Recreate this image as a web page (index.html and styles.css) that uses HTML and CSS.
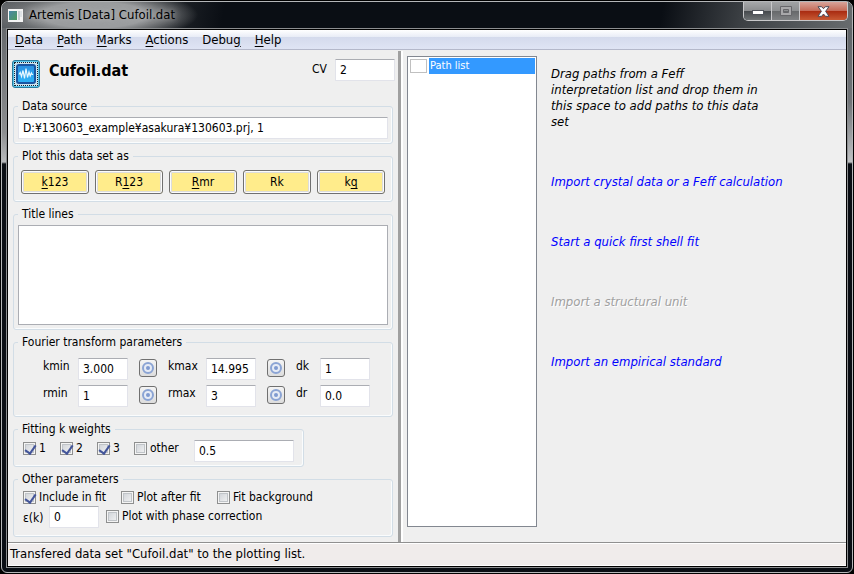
FILE: index.html
```html
<!DOCTYPE html>
<html lang="en">
<head>
<meta charset="utf-8">
<title>Artemis [Data] Cufoil.dat</title>
<link rel="stylesheet" href="styles.css">
</head>
<body>
<div class="window">
  <header class="titlebar">
    <svg class="app-icon" width="15" height="13" viewBox="0 0 15 13" aria-hidden="true">
      <defs>
        <linearGradient id="pane" x1="0" y1="0" x2="1" y2="1"><stop offset="0" stop-color="#4a86a8"/><stop offset="1" stop-color="#4d9a5c"/></linearGradient>
      </defs>
      <rect width="15" height="13" fill="#f4f4f4"/>
      <rect x="1" y="2" width="8" height="9" fill="url(#pane)"/>
      <rect x="10" y="2" width="2" height="9" fill="#c9d0d4"/>
      <rect x="12" y="2" width="2" height="6" fill="#dfe3e6"/>
    </svg>
    <span class="title-text">Artemis [Data] Cufoil.dat</span>
    <div class="window-buttons">
      <button type="button" class="win-btn" aria-label="Minimize">
        <svg width="12" height="6" viewBox="0 0 12 6"><rect x=".5" y=".5" width="11" height="4" fill="#fff" stroke="#50545c"/></svg>
      </button>
      <button type="button" class="win-btn" aria-label="Maximize" disabled>
        <svg width="12" height="10" viewBox="0 0 12 10"><path d="M.5.5h11v9H.5zM3.500 3.500h5v3h-5z" fill="#a8a8aa" fill-rule="evenodd" stroke="#66666a"/></svg>
      </button>
      <button type="button" class="win-btn win-close" aria-label="Close">
        <svg width="13" height="11" viewBox="0 0 13 11"><path d="M1 .7h3.600l1.900 2 1.900-2H12L8.600 5.300 12 10.300H8.400L6.500 8 4.600 10.300H1l3.400-5z" fill="#fff" stroke="#4a4a58"/></svg>
      </button>
    </div>
  </header>
  <div class="client">
    <nav class="menubar">
      <button type="button"><u>D</u>ata</button>
      <button type="button"><u>P</u>ath</button>
      <button type="button"><u>M</u>arks</button>
      <button type="button"><u>A</u>ctions</button>
      <button type="button">Debu<u>g</u></button>
      <button type="button"><u>H</u>elp</button>
    </nav>
    <main class="content">
      <form class="data-pane">
        <div class="head">
          <button type="button" class="plot-toggle" aria-label="Plot data">
            <svg width="20" height="20" viewBox="0 0 20 20">
              <defs><linearGradient id="scope" x1="0" y1="0" x2="0" y2="1"><stop offset="0" stop-color="#2a8ee0"/><stop offset="1" stop-color="#2db4f8"/></linearGradient></defs>
              <rect x="1" y="1" width="18" height="18" rx="2" fill="url(#scope)" stroke="#1a55a0" stroke-width="2"/>
              <path d="M3 10.500l1.200-2L5.500 12.500l1.500-6 1.500 8 1.500-10 1.500 9 1.500-5.500 1.200 4 1.200-3 .8 1.500h1" fill="none" stroke="#e8f8ff" stroke-width="1.200"/>
            </svg>
          </button>
          <h1>Cufoil.dat</h1>
          <label class="cv-label" for="cv">CV</label>
          <input class="field cv" id="cv" value="2">
        </div>

        <fieldset class="source">
          <legend>Data source</legend>
          <input class="field wide" aria-label="Data source" value="D:¥130603_example¥asakura¥130603.prj, 1">
        </fieldset>

        <fieldset class="plots">
          <legend>Plot this data set as</legend>
          <div class="plot-row">
            <button type="button"><u>k</u>123</button>
            <button type="button">R<u>1</u>23</button>
            <button type="button"><u>R</u>mr</button>
            <button type="button">Rk</button>
            <button type="button">k<u>q</u></button>
          </div>
        </fieldset>

        <fieldset class="titles">
          <legend>Title lines</legend>
          <textarea aria-label="Title lines"></textarea>
        </fieldset>

        <fieldset class="fourier">
          <legend>Fourier transform parameters</legend>
          <div class="ft-grid">
            <label for="kmin">kmin</label><input class="field" id="kmin" value="3.000">
            <button type="button" class="pluck" aria-label="Pick kmin"><svg width="14" height="14" viewBox="0 0 14 14"><circle cx="7" cy="7" r="5" fill="#e6ebf5" stroke="#8ba4d4" stroke-width="2"/><circle cx="7" cy="7" r="2" fill="#7f9ad0"/></svg></button>
            <label for="kmax">kmax</label><input class="field" id="kmax" value="14.995">
            <button type="button" class="pluck" aria-label="Pick kmax"><svg width="14" height="14" viewBox="0 0 14 14"><circle cx="7" cy="7" r="5" fill="#e6ebf5" stroke="#8ba4d4" stroke-width="2"/><circle cx="7" cy="7" r="2" fill="#7f9ad0"/></svg></button>
            <label for="dk">dk</label><input class="field" id="dk" value="1">
            <label for="rmin">rmin</label><input class="field" id="rmin" value="1">
            <button type="button" class="pluck" aria-label="Pick rmin"><svg width="14" height="14" viewBox="0 0 14 14"><circle cx="7" cy="7" r="5" fill="#e6ebf5" stroke="#8ba4d4" stroke-width="2"/><circle cx="7" cy="7" r="2" fill="#7f9ad0"/></svg></button>
            <label for="rmax">rmax</label><input class="field" id="rmax" value="3">
            <button type="button" class="pluck" aria-label="Pick rmax"><svg width="14" height="14" viewBox="0 0 14 14"><circle cx="7" cy="7" r="5" fill="#e6ebf5" stroke="#8ba4d4" stroke-width="2"/><circle cx="7" cy="7" r="2" fill="#7f9ad0"/></svg></button>
            <label for="dr">dr</label><input class="field" id="dr" value="0.0">
          </div>
        </fieldset>

        <fieldset class="weights">
          <legend>Fitting k weights</legend>
          <div class="weight-row">
            <label class="check"><input type="checkbox" checked>1</label>
            <label class="check"><input type="checkbox" checked>2</label>
            <label class="check"><input type="checkbox" checked>3</label>
            <label class="check other"><input type="checkbox">other</label>
            <input class="field" aria-label="Other k weight" value="0.5">
          </div>
        </fieldset>

        <fieldset class="others">
          <legend>Other parameters</legend>
          <div class="other-row">
            <label class="check include"><input type="checkbox" checked>Include in fit</label>
            <label class="check after"><input type="checkbox">Plot after fit</label>
            <label class="check"><input type="checkbox">Fit background</label>
          </div>
          <div class="epsilon-row">
            <label class="epsilon" for="eps">ε(k)</label>
            <input class="field" id="eps" value="0">
            <label class="check"><input type="checkbox">Plot with phase correction</label>
          </div>
        </fieldset>
      </form>
      <div class="sash"></div>
      <section class="path-pane">
        <div class="path-list">
          <label class="path-item"><input type="checkbox"><span>Path list</span></label>
        </div>
        <div class="hints">
          <p>Drag paths from a Feff<br>interpretation list and drop them in<br>this space to add paths to this data<br>set</p>
          <a href="#crystal">Import crystal data or a Feff calculation</a>
          <a href="#quick">Start a quick first shell fit</a>
          <span class="disabled">Import a structural unit</span>
          <a href="#empirical">Import an empirical standard</a>
        </div>
      </section>
    </main>
    <footer class="statusbar">Transfered data set "Cufoil.dat" to the plotting list.</footer>
  </div>
</div>
</body>
</html>
```
FILE: styles.css
```css
* { box-sizing: border-box; }

body {
  margin: 0;
  background: #000;
  color: #000;
  font: 12px/16px "DejaVu Sans Condensed", Tahoma, "Noto Sans", sans-serif;
}

button, input, textarea { font: inherit; color: inherit; margin: 0; }
button { padding: 0; border: 0; background: none; }
u { text-underline-offset: 2px; }

/* Window frame */
.window {
  display: flex;
  flex-direction: column;
  height: calc(100vh - 2px);
  margin: 1px;
  padding: 0 4px 4px;
  border: 1px solid #b4b6b8;
  border-radius: 7px 7px 6px 6px;
  background:
    linear-gradient(#5c6064, #8c8e90 130px, #b8babc 160px, #0a0e14 162px) left top / 4px 100% no-repeat,
    linear-gradient(#5c6064, #707478 100px, #c0c2c4 160px, #0a0e14 162px) right top / 4px 100% no-repeat,
    #0a0e14;
}

.titlebar {
  display: flex;
  align-items: flex-start;
  flex: none;
  height: 26px;
  margin: 0 -4px;
  padding-left: 6px;
  border-radius: 6px 6px 0 0;
  background:
    radial-gradient(ellipse 104px 26px at 92px 13px, #9a9c9e 50%, rgba(120, 122, 124, .7) 75%, transparent),
    linear-gradient(100deg, #5c6064, #34383c 120px, #0a0e14 220px, #0a0e14 calc(100% - 190px), #3c4044 calc(100% - 110px), #686c6e);
}
.app-icon { margin: 7px 6px 0 0; }
.title-text { margin-top: 5px; font-size: 13px; text-shadow: 0 0 6px #c4c4c4; }

.window-buttons {
  display: flex;
  margin: 0 4px 0 auto;
  border: 1px solid #c8c8ca;
  border-top: 0;
  border-radius: 0 0 5px 5px;
  overflow: hidden;
}
.win-btn {
  display: flex;
  flex: none;
  align-items: center;
  justify-content: center;
  width: 28px;
  height: 18px;
  border-right: 1px solid #c8c8ca;
  background: linear-gradient(#a6a8aa, #8a8c8e 50%, #44484c 50%, #6e7274);
}
.win-btn:disabled { background: linear-gradient(#a0a2a4, #8c8e90 50%, #66686a 50%, #808284); }
.win-btn:first-child svg { margin-top: 4px; }
.win-close {
  width: 47px;
  border: 0;
  background: linear-gradient(#d8a49a, #c66b58 48%, #a82a10 50%, #c85a34);
}

.client {
  display: flex;
  flex-direction: column;
  flex: 1;
  min-height: 0;
  border: 1px solid #8c8e90;
  outline: 1px solid #000;
  outline-offset: -2px;
  padding: 1px;
  background: #efefef;
}

.menubar {
  display: flex;
  flex: none;
  gap: 14px;
  height: 20px;
  padding: 0 7px;
  border-bottom: 1px solid #b4b8ca;
  background: linear-gradient(#fff, #e8ecf6 7px, #d4daec 7px, #dfe4f4);
  font-size: 13px;
}

/* Data pane */
.content { display: flex; flex: 1; min-height: 0; }
.data-pane { flex: none; width: 390px; padding: 9px 3px 5px 5px; }

.head { display: flex; align-items: flex-start; height: 39px; margin-left: -1px; }
.plot-toggle {
  display: grid;
  place-items: center;
  width: 28px;
  height: 28px;
  margin-top: 1px;
  border: 1px solid #2a7a9c;
  border-radius: 3px;
  background: #5cc8ec;
  position: relative;
}
.plot-toggle::before {
  content: "";
  position: absolute;
  inset: 1px;
  border: 1px dotted #123;
  background: #cfe4ee;
}
.plot-toggle svg { position: relative; }
h1 { margin: 2px auto 0 9px; font-size: 16px; line-height: 20px; font-weight: bold; }
.cv-label { margin: 2px 8px 0 0; }

.field {
  width: 50px;
  height: 22px;
  padding: 0 4px;
  border: 1px solid #e2e3ea;
  border-top-color: #abadb3;
  border-radius: 1px;
  background: #fff;
}
.field.cv { width: 60px; }
.field.wide { display: block; width: 100%; }

fieldset {
  width: 380px;
  min-width: 0;
  margin: 0 0 4px;
  border: 1px solid #d2dde6;
  border-radius: 3px;
  box-shadow: inset -1px -1px #fafcfd;
}
legend { padding: 0 4px; }

.source { padding: 3px 4px 4px; }
.plots { padding: 6px 7px 7px; }
.titles { padding: 3px 4px 4px; }
.fourier { padding: 8px 22px 9px 29px; }
.weights { width: 291px; padding: 3px 9px 4px; }
.others { padding: 2px 9px 8px; margin-bottom: 0; }
.plots legend { margin-left: -3px; }
.fourier legend { margin-left: -25px; }
.weights legend, .others legend { margin-left: -5px; }

.plot-row { display: flex; gap: 6px; }
.plot-row button {
  width: 68px;
  height: 24px;
  border: 1px solid #707070;
  border-radius: 3px;
  background: #ffec8b;
  box-shadow: inset 0 0 0 1px #fcfcfc, inset 0 0 0 2px #dcdcdc;
}

textarea {
  display: block;
  width: 100%;
  height: 100px;
  border: 1px solid #abadb3;
  resize: none;
  background: #fff;
}

.ft-grid {
  display: grid;
  grid-template-columns: 35px 61px 29px 38px 61px 29px 24px 50px;
  row-gap: 5px;
}
.pluck {
  display: grid;
  place-items: center;
  width: 18px;
  height: 18px;
  margin-top: 1px;
  border: 1px solid #707070;
  border-radius: 3px;
  background: linear-gradient(#f4f4f4, #ddd);
}

.check { display: flex; align-items: center; gap: 3px; height: 16px; }
.check input, .path-item input {
  appearance: none;
  flex: none;
  width: 13px;
  height: 13px;
  border: 1px solid #8e8f8f;
  background: linear-gradient(135deg, #cbcfd5, #f6f6f6);
  box-shadow: inset 0 0 0 1px #f4f4f4, inset 0 0 0 2px #c0c4c8;
}
.check input:checked::after {
  content: "";
  display: block;
  width: 5px;
  height: 9px;
  margin: 0 0 0 3px;
  border: solid #43559a;
  border-width: 0 2px 2px 0;
  transform: rotate(35deg);
}
.weight-row { display: flex; }
.weight-row .check { width: 37px; }
.weight-row .other { width: 60px; }
.weight-row .field { width: 100px; }

.other-row { display: flex; margin-bottom: 1px; }
.include { width: 98px; }
.after { width: 96px; }
.epsilon-row { display: flex; }
.epsilon { width: 26px; padding-top: 4px; }
.epsilon-row .check { margin: 2px 0 0 7px; }

.sash {
  flex: none;
  width: 5px;
  margin-top: 1px;
  border-left: 3px solid #a0a0a0;
  border-right: 2px solid #fff;
}

/* Path pane */
.path-pane { display: flex; flex: 1; padding: 6px 4px 15px; }
.path-list {
  flex: none;
  width: 130px;
  padding: 1px;
  border: 1px solid #828790;
  background: #fff;
}
.path-item { display: flex; gap: 2px; height: 16px; font-size: 11px; color: #fff; }
.path-item input {
  width: 17px;
  height: 14px;
  margin: 1px 0 0 1px;
  border-color: #c0c0c0;
  background: #fff;
  box-shadow: none;
}
.path-item span { flex: 1; padding-left: 1px; background: #3399ff; }

.hints {
  display: flex;
  flex-direction: column;
  align-items: flex-start;
  gap: 44px;
  padding: 10px 0 0 14px;
  font-size: 13px;
  font-style: italic;
}
.hints p { margin: 0; }
.hints a { color: #00f; text-decoration: none; }
.disabled { color: #a0a0a0; text-shadow: 1px 1px #fff; }

.statusbar {
  flex: none;
  height: 24px;
  padding: 3px 2px 0;
  border-top: 1px solid #909090;
  border-bottom: 1px solid #fff;
  background: #f0eceb;
  box-shadow: inset 0 1px #fff;
  font-size: 13px;
}
```
